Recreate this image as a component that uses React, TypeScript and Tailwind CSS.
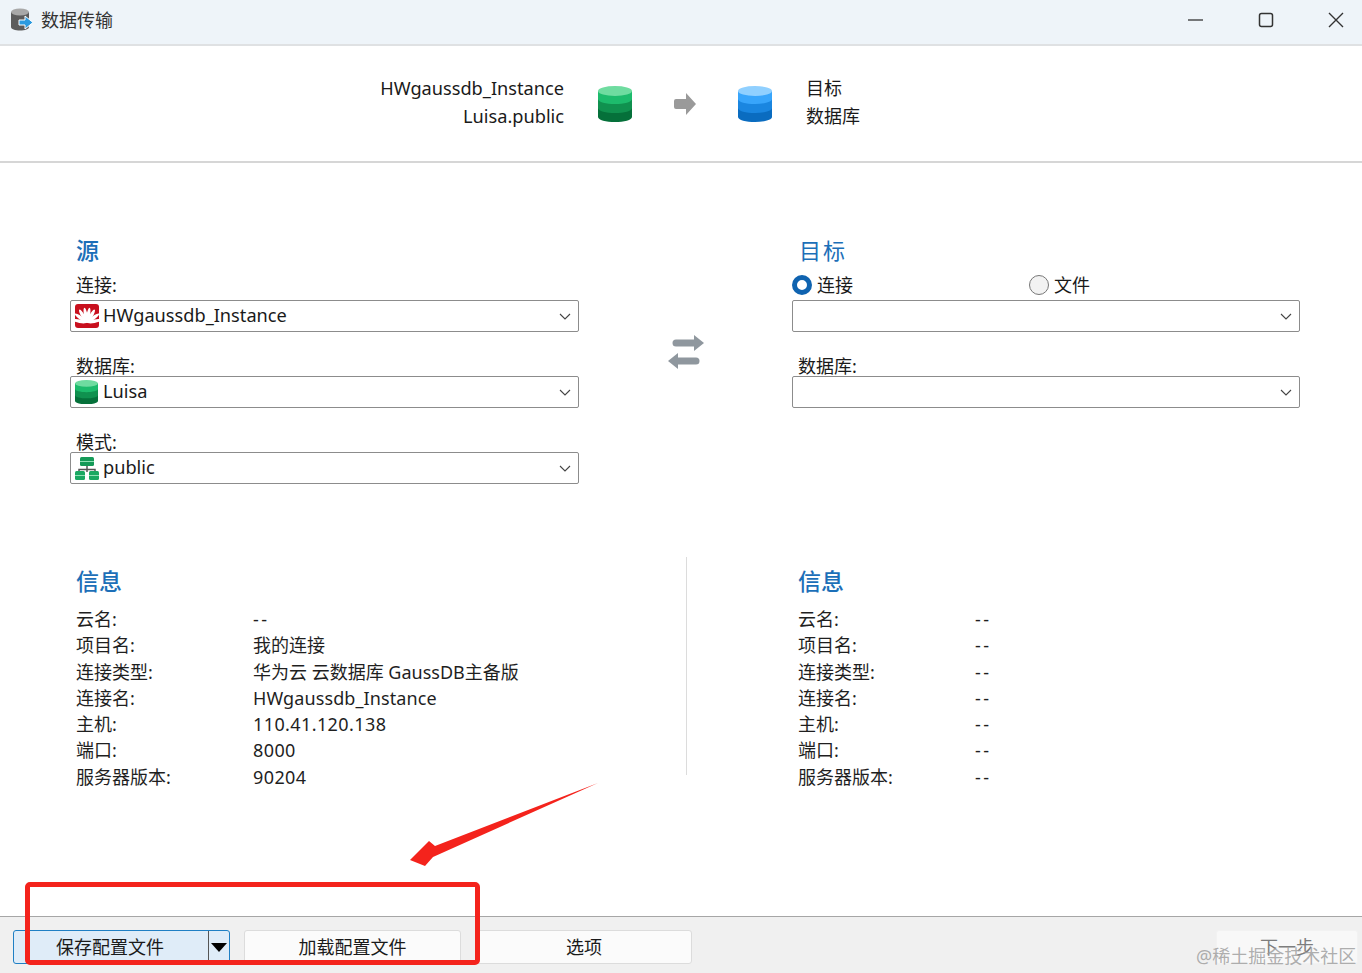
import { ReactNode } from 'react';

const font = "font-['Noto_Sans','Noto_Sans_CJK_SC',sans-serif]";

function Cylinder({ top, a, b, c, size = 34 }: { top: string; a: string; b: string; c: string; size?: number }) {
  return (
    <svg width={size} height={(size * 36) / 34} viewBox="0 0 34 36" className="shrink-0">
      <path d="M0 5v26c0 3 8 5 17 5s17-2 17-5V5z" fill={c} />
      <path d="M0 5v17c0 3 8 5 17 5s17-2 17-5V5z" fill={b} />
      <path d="M0 5v8c0 3 8 5 17 5s17-2 17-5V5z" fill={a} />
      <ellipse cx="17" cy="5" rx="17" ry="5" fill={top} />
    </svg>
  );
}

function GreenDb({ size }: { size?: number }) {
  return <Cylinder top="#6fdca0" a="#1dbb6c" b="#10914f" c="#05703a" size={size} />;
}

function HuaweiIcon() {
  const petals = [-80, -54, -31, -10, 10, 31, 54, 80];
  return (
    <svg width="24" height="24" viewBox="0 0 24 24" className="shrink-0">
      <rect width="24" height="24" rx="3" fill="#c8101e" />
      {petals.map((r) => (
        <ellipse key={r} cx="12" cy="11" rx="1.800" ry="7.500" fill="#fff" transform={`rotate(${r} 12 18.500)`} />
      ))}
    </svg>
  );
}

function SchemaIcon() {
  return (
    <svg width="24" height="24" viewBox="0 0 24 24" className="shrink-0">
      <path d="M12 9v7M4 16v-2.500h16V16" stroke="#555" strokeWidth="1.500" fill="none" />
      <rect x="5" y="1" width="14" height="9" rx="1.500" fill="#159a58" />
      <rect x="5" y="5" width="14" height="1" fill="#8fe0b4" />
      <rect x="0" y="15" width="10" height="9" rx="1.500" fill="#1aa862" />
      <rect x="0" y="19" width="10" height="1" fill="#8fe0b4" />
      <rect x="14" y="15" width="10" height="9" rx="1.500" fill="#1aa862" />
      <rect x="14" y="19" width="10" height="1" fill="#8fe0b4" />
    </svg>
  );
}

function Combo({ icon, text }: { icon?: ReactNode; text?: string }) {
  return (
    <div className="h-[32px] border border-[#8c8c8c] rounded-[2px] bg-white flex items-center pl-[4px] pr-[7px]">
      {icon}
      {text && <span className="ml-[4px] pb-[2px] text-[18.2px] leading-[28px] text-[#1a1a1a]">{text}</span>}
      <svg width="12" height="7" viewBox="0 0 12 7" className="ml-auto">
        <path d="M1 1l5 5 5-5" stroke="#444" strokeWidth="1.100" fill="none" />
      </svg>
    </div>
  );
}

function FieldLabel({ children, first }: { children: ReactNode; first?: boolean }) {
  return (
    <div className={first ? 'h-[25px] pl-[6px] text-[18px] leading-[20px]' : 'mt-[24px] h-[20px] pl-[6px] text-[18px] leading-[20px]'}>
      {children}
    </div>
  );
}

function Radio({ checked }: { checked?: boolean }) {
  return checked ? (
    <span className="w-[20px] h-[20px] rounded-full border-[5px] border-[#0f63b0] bg-white" />
  ) : (
    <span className="w-[20px] h-[20px] rounded-full border border-[#777] bg-[#f2f2f2]" />
  );
}

function valueClass(value: string) {
  if (value === '--') return 'tracking-[2.500px]';
  if (/^[\d.]+$/.test(value)) return 'tracking-[0.4px]';
  if (value.startsWith('HW')) return 'tracking-[0.1px]';
  return '';
}

function InfoColumn({ rows, className }: { rows: [string, string][]; className: string }) {
  return (
    <div className={className}>
      <h2 className="h-[49px] text-[23px] leading-[49px] text-[#1c6fb8] font-medium">信息</h2>
      {rows.map(([label, value]) => (
        <div key={label} className="flex h-[26.3px] text-[18px] leading-[26px] text-[#1f1f1f]">
          <span className="w-[177px] shrink-0">{label}</span>
          <span className={valueClass(value)}>{value}</span>
        </div>
      ))}
    </div>
  );
}

const sourceRows: [string, string][] = [
  ['云名:', '--'],
  ['项目名:', '我的连接'],
  ['连接类型:', '华为云 云数据库 GaussDB主备版'],
  ['连接名:', 'HWgaussdb_Instance'],
  ['主机:', '110.41.120.138'],
  ['端口:', '8000'],
  ['服务器版本:', '90204'],
];

const targetRows: [string, string][] = sourceRows.map(([label]) => [label, '--']);

function FooterButton({ label, className }: { label: string; className: string }) {
  return (
    <button className={`h-[34px] border border-[#dcdcdc] rounded-[3px] bg-[#fbfbfb] text-[18px] text-[#1a1a1a] ${className}`}>
      {label}
    </button>
  );
}

export default function App() {
  return (
    <div className={`relative w-[1362px] h-[973px] overflow-hidden flex flex-col bg-white text-[#1a1a1a] ${font}`}>
      {/* title bar */}
      <div className="h-[46px] shrink-0 flex items-center bg-[#eef4f9] border-b-2 border-[#dfe1e3] pl-[10px] pb-[6px] pt-[2px]">
        <svg width="24" height="24" viewBox="0 0 24 24">
          <path d="M1 4v15c0 2 4 3.500 9 3.500s9-1.500 9-3.500V4z" fill="#5c5c5c" />
          <ellipse cx="10" cy="4" rx="9" ry="3.500" fill="#a8a8a8" />
          <path d="M9 12h6V8l8 6.500-8 6.500v-4H9z" fill="#2c9be0" stroke="#fff" strokeWidth="1" />
        </svg>
        <span className="ml-[7px] text-[18px] text-[#333]">数据传输</span>
        <div className="ml-auto mr-[18px] flex items-center gap-[54px]">
          <svg width="16" height="16" viewBox="0 0 16 16">
            <path d="M0 8h15" stroke="#333" strokeWidth="1.300" />
          </svg>
          <svg width="16" height="16" viewBox="0 0 16 16">
            <rect x="1.500" y="1.500" width="13" height="13" rx="2" stroke="#333" strokeWidth="1.500" fill="none" />
          </svg>
          <svg width="16" height="16" viewBox="0 0 16 16">
            <path d="M1 1l14 14M15 1L1 15" stroke="#333" strokeWidth="1.400" />
          </svg>
        </div>
      </div>

      {/* transfer summary */}
      <div className="h-[117px] shrink-0 flex items-center border-b-2 border-[#d6d6d6] pb-[3px]">
        <div className="w-[564px] text-right text-[18.2px] leading-[28px]">
          <div>HWgaussdb_Instance</div>
          <div>Luisa.public</div>
        </div>
        <div className="ml-[34px] mt-[4px]">
          <GreenDb />
        </div>
        <svg width="22" height="22" viewBox="0 0 22 22" className="ml-[42px] mt-[4px]">
          <path d="M0 8a2 2 0 012-2h10V0l10 11-10 11v-6H2a2 2 0 01-2-2z" fill="#9a9a9a" />
        </svg>
        <div className="ml-[42px] mt-[4px]">
          <Cylinder top="#90d0ff" a="#38a5fb" b="#1a86e0" c="#0a6cc0" />
        </div>
        <div className="ml-[34px] text-[18px] leading-[28px]">
          <div>目标</div>
          <div>数据库</div>
        </div>
      </div>

      {/* source / target selection */}
      <div className="h-[394px] shrink-0 pt-[73px] pl-[70px] flex">
        <div className="w-[509px]">
          <h2 className="h-[39px] pl-[6px] text-[23px] leading-[28px] text-[#1c6fb8] font-medium">源</h2>
          <FieldLabel first>连接:</FieldLabel>
          <Combo icon={<HuaweiIcon />} text="HWgaussdb_Instance" />
          <FieldLabel>数据库:</FieldLabel>
          <Combo icon={<div className="w-[24px]"><GreenDb size={23} /></div>} text="Luisa" />
          <FieldLabel>模式:</FieldLabel>
          <Combo icon={<SchemaIcon />} text="public" />
        </div>
        <div className="w-[213px] pl-[89px] pt-[99px]">
          <svg width="36" height="34" viewBox="0 0 36 34">
            <path d="M8 4.500h18V0l10 8-10 8v-4.500H8a3.500 3.500 0 010-7z" fill="#8f979e" />
            <path d="M28 22.500H10V18L0 26l10 8v-4.500h18a3.500 3.500 0 000-7z" fill="#8f979e" />
          </svg>
        </div>
        <div className="w-[508px]">
          <h2 className="h-[39px] pl-[7px] text-[22px] leading-[28px] tracking-[2px] text-[#1c6fb8]">目标</h2>
          <div className="h-[25px] flex items-start text-[18px] leading-[20px]">
            <div className="w-[237px] flex items-center gap-[5px]">
              <Radio checked />
              连接
            </div>
            <div className="flex items-center gap-[5px]">
              <Radio />
              文件
            </div>
          </div>
          <Combo />
          <FieldLabel>数据库:</FieldLabel>
          <Combo />
        </div>
      </div>

      {/* connection details */}
      <div className="flex-1 flex pl-[76px]">
        <InfoColumn rows={sourceRows} className="w-[610px]" />
        <div className="w-px h-[218px] bg-[#dcdcdc]" />
        <InfoColumn rows={targetRows} className="pl-[111px]" />
      </div>

      {/* footer */}
      <div className="h-[57px] shrink-0 bg-[#f0f0f0] border-t border-[#a6a6a6] pt-[13px] pl-[13px] flex items-start">
        <div className="w-[217px] h-[34px] border border-[#1f7fc4] rounded-[3px] bg-[#dfecf8] flex text-[18px]">
          <span className="w-[192px] text-center leading-[33px]">保存配置文件</span>
          <span className="ml-[2px] w-px bg-[#555]" />
          <span className="flex-1 flex items-center justify-center">
            <svg width="16" height="9" viewBox="0 0 16 9">
              <path d="M0 0h16L8 9z" fill="#000" />
            </svg>
          </span>
        </div>
        <FooterButton label="加载配置文件" className="ml-[14px] w-[217px]" />
        <FooterButton label="选项" className="ml-[15px] w-[216px]" />
        <button className="ml-auto mr-[4px] w-[142px] h-[34px] border border-[#f2f2f2] rounded-[3px] bg-[#f8f8f8] text-[18px] text-[#7d7d7d]">
          下一步
        </button>
      </div>

      {/* annotation drawn over the screenshot */}
      <div className="absolute left-[25px] top-[882px] w-[455px] h-[83px] border-[5px] border-[#f4231c] rounded-[5px]" />
      <svg width="200" height="90" viewBox="0 0 200 90" className="absolute left-[405px] top-[780px]">
        <path d="M193 3L30 66l-6-5L5 80l15 6 8-9z" fill="#f4231c" />
      </svg>
      <span className="absolute left-[1196px] top-[944px] text-[18px] leading-[24px] text-[#9a9a9a]/80">@稀土掘金技术社区</span>
    </div>
  );
}
